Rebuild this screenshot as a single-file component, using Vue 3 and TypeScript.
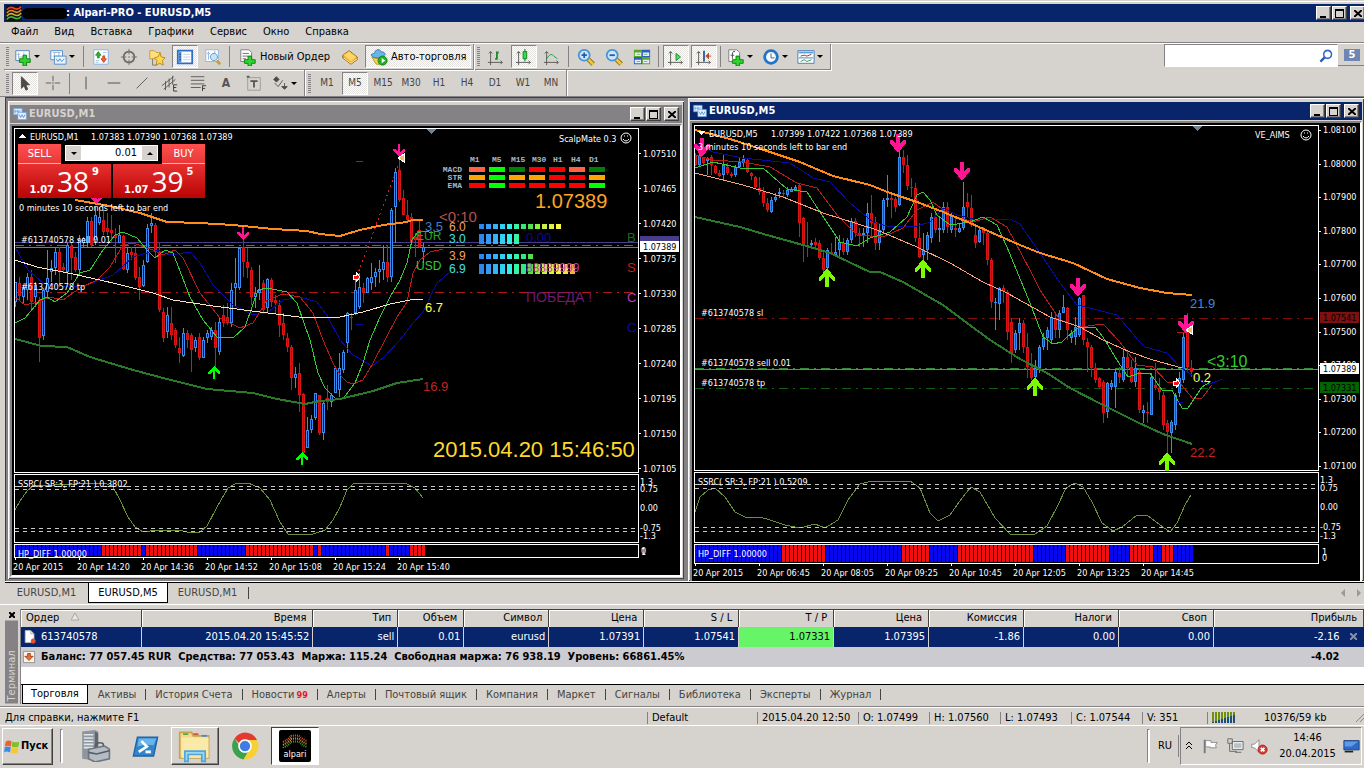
<script setup lang="ts">
import { h, ref } from 'vue'

type Shape = { d: string; f?: string; s?: string; w?: number }
type Candle = { x: number; up: boolean; hi: number; top: number; bottom: number; lo: number }

const icons: Record<string, Shape[]> = {
  newChart: [
    { d: 'M2 3h15v11H2z', f: '#fff', s: '#4a7fb5' },
    { d: 'M5 5v7M3 7h4M5 10h9M11 5v7', s: '#9db8d2' },
    { d: 'M10 8h4v4h4v4h-4v4h-4v-4H6v-4h4z', f: '#2fd52f', s: '#0a7a0a' },
  ],
  profiles: [
    { d: 'M2 3h13v10H2z', f: '#fff', s: '#4a8ac8' },
    { d: 'M4 5h9M6 5v6M11 5v6M4 9h9', s: '#9db8d2' },
    { d: 'M6 9h13v9H6z', f: '#e8f2fb', s: '#4a8ac8' },
    { d: 'M8 12l2 3 2-3 2 3 3-3', s: '#4a8ac8' },
  ],
  market: [
    { d: 'M2 2h16v16H2z', f: '#fff', s: '#7fb2e5' },
    { d: 'M7 4l3 4H8v3H6V8H4z', f: '#2fae2f', s: '#2f8f2f' },
    { d: 'M12 5h4M12 8h3M4 14h4M4 16h3', s: '#9cc4ea' },
    { d: 'M13 16l-3-4h2V9h2v3h2z', f: '#f0643c', s: '#c8401e' },
  ],
  crossCircle: [
    { d: 'M10 4a6 6 0 1 0 .01 0z', s: '#6e6e6e', w: 2 },
    { d: 'M10 1v6M10 13v6M1 10h6M13 10h6M9 10h2', s: '#6e6e6e' },
  ],
  favorites: [
    { d: 'M2 3h5l2 2h5v7H2z', f: '#ffe080', s: '#c89a2c' },
    { d: 'M5 12v7h5', s: '#777' },
    { d: 'M13 6l2 4 4 1-3 3 1 5-4-2-4 2 1-5-3-3 4-1z', f: '#ffd84c', s: '#b88612' },
  ],
  terminal: [
    { d: 'M2 3h16v14H2z', f: '#fff', s: '#2f6ec4', w: 2 },
    { d: 'M3 4h3v12H3z', f: '#4b93e0' },
    { d: 'M8 7h8M8 10h8M8 13h8', s: '#bcd0ea' },
    { d: 'M4 7h1M4 10h1M4 13h1', s: '#000' },
  ],
  tester: [
    { d: 'M2 2h14v13H2z', f: '#fff', s: '#8fb6dc' },
    { d: 'M5 4v9M3 6h4M12 3v6', s: '#8fb6dc' },
    { d: 'M14 14l4 4', s: '#d09a28', w: 3 },
    { d: 'M11 6a4 4 0 1 0 .01 0z', f: '#c9e2f8', s: '#5f95c8' },
  ],
  newOrder: [
    { d: 'M2 2h9l3 3v10H2z', f: '#fff', s: '#777' },
    { d: 'M4 6h7M4 9h6M4 12h4', s: '#666' },
    { d: 'M10 9h4v4h4v4h-4v3h-4v-3H6v-4h4z', f: '#2fd52f', s: '#0a7a0a' },
  ],
  book: [
    { d: 'M2 8l7-5 9 7v3l-7 5-9-7z', f: '#e8a820', s: '#8a5a10' },
    { d: 'M3 8l6-4 8 6-6 5z', f: '#ffd768', s: '#f8c040' },
    { d: 'M3 11l8 6 7-5', s: '#fff3c0' },
  ],
  expert: [
    { d: 'M2 10q8 4 14 0l-4 8H7z', f: '#f7d34c', s: '#b99017' },
    { d: 'M1 8q2 3 8 3t8-4q-1-3-5-3-1-3-4-2t-3 4q-3 0-4 2z', f: '#69b4e8', s: '#2f7fba' },
    { d: 'M14 9a5 5 0 1 0 .01 0z', f: '#23b123', s: '#0d7a0d' },
    { d: 'M13 11l4 3-4 3z', f: '#fff' },
  ],
  bars: [
    { d: 'M4 4v15M2 6l2-2 2 2M1 16h16M15 14l2 2-2 2', s: '#555' },
    { d: 'M11 4v9M9 12h2M11 5h2', s: '#1c8a2c', w: 2 },
  ],
  candles: [
    { d: 'M4 4v15M2 6l2-2 2 2M1 16h16M15 14l2 2-2 2', s: '#555' },
    { d: 'M11 1v14', s: '#086a18' },
    { d: 'M9 4h4v8H9z', f: '#2fe24a', s: '#0a7a1c' },
  ],
  line: [
    { d: 'M4 4v15M2 6l2-2 2 2M1 16h16M15 14l2 2-2 2', s: '#555' },
    { d: 'M4 12q5-8 8-3l4 3', s: '#1c9a3c' },
  ],
  zoomIn: [
    { d: 'M12 12l6 6', s: '#8a6a10', w: 5 },
    { d: 'M12 12l6 6', s: '#f0c840', w: 3 },
    { d: 'M8 2a6 6 0 1 0 .01 0z', f: '#cfe6fa', s: '#4a94d8', w: 2 },
    { d: 'M5 8h6M8 5v6', s: '#1b5faf', w: 2 },
  ],
  zoomOut: [
    { d: 'M12 12l6 6', s: '#8a6a10', w: 5 },
    { d: 'M12 12l6 6', s: '#f0c840', w: 3 },
    { d: 'M8 2a6 6 0 1 0 .01 0z', f: '#cfe6fa', s: '#4a94d8', w: 2 },
    { d: 'M5 8h6', s: '#1b5faf', w: 2 },
  ],
  tiles: [
    { d: 'M1 2h9v8H1zM10 10h9v8h-9z', f: '#5aa428' },
    { d: 'M10 2h9v8h-9zM1 10h9v8H1z', f: '#2c5fc4' },
    { d: 'M2 5h7v4H2zM11 5h7v4h-7zM2 13h7v4H2zM11 13h7v4h-7z', f: '#e6efff' },
    { d: 'M4 7h4M12 7h4M4 15h4M12 15h4', s: '#7ab060' },
  ],
  autoscroll: [
    { d: 'M4 4v15M2 6l2-2 2 2M1 16h16M15 14l2 2-2 2', s: '#555' },
    { d: 'M10 6l5 4-5 4z', f: '#4fe05c', s: '#148a24' },
  ],
  shift: [
    { d: 'M4 4v15M2 6l2-2 2 2M1 16h16M15 14l2 2-2 2', s: '#555' },
    { d: 'M10 3v12', s: '#245a9c', w: 2 },
    { d: 'M12 9l3-3v6zM14 9h4', f: '#e0552a', s: '#b8401c' },
  ],
  indicators: [
    { d: 'M2 2h9l3 3v10H2z', f: '#fff', s: '#777' },
    { d: 'M9 4q-3-1-3 3v5M4 8h4', s: '#444' },
    { d: 'M10 9h4v4h4v4h-4v3h-4v-3H6v-4h4z', f: '#2fd52f', s: '#0a7a0a' },
  ],
  clock: [
    { d: 'M10 3a7 7 0 1 0 .01 0z', f: '#f4faff', s: '#2274c8', w: 3 },
    { d: 'M10 6v5h4', s: '#555' },
  ],
  templates: [
    { d: 'M1 3h18v14H1z', f: '#fff', s: '#3c7ab4' },
    { d: 'M2 4h16v2H2z', f: '#5aa0dc' },
    { d: 'M4 9l4-1 3 1 5-2', s: '#803028' },
    { d: 'M4 15l4-2 3 2 5-2', s: '#2d9440' },
    { d: 'M2 11h16', s: '#3c7ab4' },
  ],
  cursor: [{ d: 'M6 3v13l3-3 2 5 2-1-2-5h4z', f: '#4a4a4a', s: '#4a4a4a' }],
  cross: [{ d: 'M10 2v6M10 12v6M2 10h6M12 10h6M9 10h2', s: '#555' }],
  vline: [{ d: 'M10 3v14', s: '#444' }],
  hline: [{ d: 'M3 10h14', s: '#444' }],
  trend: [{ d: 'M4 16L16 4', s: '#555' }],
  channel: [
    { d: 'M1 13L14 3M3 17L16 6M5 8v10M9 5v10M13 2v10', s: '#555' },
    { d: 'M18 12h-4v7h4M14 15h3', s: '#333' },
  ],
  fibo: [
    { d: 'M2 3h15M2 7h15M2 11h15M2 15h11', s: '#555' },
    { d: 'M19 13h-4v6M15 16h3', s: '#333' },
  ],
  label: [
    { d: 'M3 4h14v14H3z', s: '#999' },
    { d: 'M6 8h8M10 8v7', s: '#555', w: 2 },
    { d: 'M2 2h3v2H2z', f: '#555' },
  ],
  arrows: [
    { d: 'M3 6l3-3 3 3-3 3zM12 14l3 3 3-3z', f: '#4a4a4a', s: '#4a4a4a' },
    { d: 'M4 10l4 4 5-7M15 10v5', s: '#555' },
  ],
  doc: [
    { d: 'M4 2h7l4 4v11H4z', f: '#fff', s: '#bbb' },
    { d: 'M11 2v4h4', s: '#999' },
    { d: 'M14 12a3 3 0 1 0 .01 0z', f: '#e8502a' },
  ],
  down: [
    { d: 'M2 2h16v16H2z', f: '#fbf3e8', s: '#777' },
    { d: 'M8 5h4v4h4l-6 6-6-6h4z', f: '#e8702c', s: '#8a2a10' },
  ],
  chartWin: [
    { d: 'M1 2h12v9H1z', f: '#dcecff', s: '#6ea8e6' },
    { d: 'M3 4v5M7 4v5M2 6h9', s: '#5a93d4' },
    { d: 'M7 8h12v10H7z', f: '#e8f3ff', s: '#6ea8e6' },
    { d: 'M9 11l2 4 2-4 2 4 2-4', s: '#3c78c0' },
  ],
  glass: [
    { d: 'M3 17l6-6', s: '#2d5cb8', w: 3 },
    { d: 'M12 3a5 5 0 1 0 .01 0z', f: '#fff', s: '#3568c8', w: 2 },
  ],
  logo: [
    { d: 'M0 0h20v20H0z', f: '#111' },
    { d: 'M1 6q4-5 9-2t9-2', s: '#f03c28', w: 2 },
    { d: 'M1 10q4-5 9-2t9-2', s: '#f08a28', w: 2 },
    { d: 'M1 14q4-5 9-2t9-2', s: '#c8b428', w: 2 },
    { d: 'M1 18q4-5 9-2t9-2', s: '#3cb43c', w: 2 },
  ],
  windows: [
    { d: 'M2 4q4-2 7 0l-1 6q-4-2-7 0z', f: '#f0602c' },
    { d: 'M10 4q4 2 8 0l-1 6q-4 2-8 0z', f: '#7cc02c' },
    { d: 'M1 11q3-2 7 0l-1 6q-4-2-7 0z', f: '#3c8ae0' },
    { d: 'M9 11q4 2 8 0l-1 6q-4 2-8 0z', f: '#f8c830' },
  ],
  server: [
    { d: 'M2 1l8-1 2 1v16l-2 2-8-1z', f: '#8d969e' },
    { d: 'M3 3h6M3 5h6M3 7h6M3 9h6M3 11h6', s: '#e2e6ea' },
    { d: 'M10 1l2 1v16h-2z', f: '#5e666e' },
    { d: 'M6 12l10-2 3 2v6l-9 2-4-2z', f: '#b4bcc4', s: '#6e767e' },
    { d: 'M10 11q0-3 3-3t2 2M6 14l5 1 8-2', s: '#555d66' },
  ],
  shell: [
    { d: 'M4 3h15l-3 14H1z', f: '#2f86cf', s: '#1f62a4' },
    { d: 'M5 4h13l-2 5q-6-1-12 1z', f: '#6ab4ea' },
    { d: 'M7 6l4 4-6 4M10 14h4', s: '#fff', w: 2 },
  ],
  explorer: [
    { d: 'M1 2h7l1 2h9v13H1z', f: '#f3d889', s: '#c8a24c' },
    { d: 'M3 3h3', s: '#3cb04c' }, { d: 'M9 3h3', s: '#d8502c' }, { d: 'M14 4h3', s: '#3c8ad0' },
    { d: 'M2 5h16v12H2z', f: '#fbe9a8' },
    { d: 'M4 13h12v6h-2v-4H6v4H4z', f: '#9cd6f4', s: '#4fa6d8' },
  ],
  chrome: [
    { d: 'M10 1a9 9 0 0 1 8 5H10a4 4 0 0 0-4 2L3 5A9 9 0 0 1 10 1z', f: '#e23b2e' },
    { d: 'M18 6a9 9 0 0 1-9 13l4-7a4 4 0 0 0-1-6z', f: '#f8cf35' },
    { d: 'M9 19A9 9 0 0 1 3 5L7 11A4 4 0 0 0 13 12z', f: '#3da04c' },
    { d: 'M10 6a4 4 0 1 0 .01 0z', f: '#3f7de0', s: '#fff' },
  ],
  flag: [
    { d: 'M3 3v15', s: '#777', w: 2 },
    { d: 'M4 4h6v2h7l-2 3 1 3h-7v-1H4z', f: '#fff', s: '#888' },
  ],
  network: [
    { d: 'M7 5h12v9H7z', f: '#e8ecf0', s: '#666' },
    { d: 'M9 7h8v5H9z', f: '#b8c0c8' },
    { d: 'M2 2h5v5H2zM4 7v9h8M10 17h7', s: '#666' },
  ],
  sound: [
    { d: 'M2 8h3l5-5v14l-5-5H2z', f: '#fff', s: '#888' },
    { d: 'M14 9a5 5 0 1 0 .01 0z', f: '#e03a2c', s: '#a81c14' },
    { d: 'M12 12l4 4M16 12l-4 4', s: '#fff', w: 2 },
  ],
  monitor: [
    { d: 'M1 3h18v11H1z', f: '#2c6cc8', s: '#1c3c78' },
    { d: 'M2 4h16l-8 6H2z', f: '#5c9ae8' },
    { d: 'M2 15h10v2H2z', f: '#222' },
  ],
}

const Glyph = (p: { name: string; size?: number }) =>
  h(
    'svg',
    { viewBox: '0 0 20 20', width: p.size ?? 18, height: p.size ?? 18, 'aria-hidden': 'true' },
    icons[p.name].map((s) =>
      h('path', { d: s.d, fill: s.f ?? 'none', stroke: s.s ?? 'none', 'stroke-width': s.w ?? 1 }),
    ),
  )
Glyph.props = ['name', 'size']

const menu = ['Файл', 'Вид', 'Вставка', 'Графики', 'Сервис', 'Окно', 'Справка']
const panels = [
  { icon: 'market', on: false, label: 'Обзор рынка' },
  { icon: 'crossCircle', on: false, label: 'Окно данных' },
  { icon: 'favorites', on: false, label: 'Навигатор' },
  { icon: 'terminal', on: true, label: 'Терминал' },
  { icon: 'tester', on: false, label: 'Тестер' },
]
const kinds = [
  { icon: 'bars', on: false, label: 'Бары' },
  { icon: 'candles', on: true, label: 'Свечи' },
  { icon: 'line', on: false, label: 'Линия' },
]
const drawing = ['vline', 'hline', 'trend', 'channel', 'fibo']
const periods = ['M1', 'M5', 'M15', 'M30', 'H1', 'H4', 'D1', 'W1', 'MN']
const period = ref('M5')
const search = ref('')
const volume = ref('0.01')

/* Candle rows: direction, high, body top, body bottom, low; prices in thirds of a pixel from the pane origin */
function candles(src: string, x0: number): Candle[] {
  return src.trim().split(/\s*;\s*/).filter(Boolean).map((row, i) => {
    const [dir, ...v] = row.split(' ')
    const [hi, top, bottom, lo] = v.map((n) => Math.round(100 + Number(n) / 3))
    return { x: x0 + i * 4, up: dir === 'b', hi, top, bottom, lo }
  })
}
function line(src: string, ox: number): string {
  return src.trim().split(' ').map((p) => {
    const [x, y] = p.split(',').map(Number)
    return `${Math.round(ox + x / 3)},${Math.round(100 + y / 3)}`
  }).join(' ')
}

const candlesM1 = candles(`
b 545 545 605 620;r 530 548 588 600;b 555 565 590 610;b 520 530 570 600;r 510 530 605 630;b 545 555 590 620;r 590 600 715 785;
b 565 570 708 720;b 450 535 575 590;b 480 503 515 545;b 445 455 505 525;r 440 457 513 560;r 490 500 510 520;b 425 435 515 550;
r 430 438 475 540;r 455 470 510 515;b 405 418 510 520;b 410 415 430 445;b 350 362 430 445;r 350 362 435 440;b 320 345 420 435;
b 320 350 368 375;r 330 360 395 405;r 340 383 395 405;r 345 390 400 430;r 385 405 415 490;b 375 405 430 430;r 405 408 508 510;
b 440 460 510 520;r 440 455 465 480;r 445 460 535 540;r 500 530 560 600;b 480 495 557 560;b 372 385 485 490;b 340 368 378 400;
r 370 375 455 475;r 430 455 630 635;r 625 635 715 725;b 620 645 695 715;r 620 670 705 720;r 685 690 735 745;r 710 745 760 790;
b 685 700 768 770;r 690 700 720 745;r 700 705 750 815;b 710 720 745 755;r 700 710 775 780;b 710 720 775 775;b 690 700 715 730;
b 680 690 710 720;r 665 690 745 800;b 655 665 755 765;r 615 645 670 680;r 610 650 668 675;b 550 570 670 680;b 475 550 565 620;
b 440 445 565 570;r 400 440 487 530;r 445 485 505 535;r 500 510 590 615;b 560 580 590 625;b 495 570 580 600;r 540 550 630 640;
b 535 538 625 635;r 535 540 605 620;r 585 600 610 640;r 600 615 675 710;r 640 670 705 720;r 700 715 740 755;r 735 740 835 870;
b 800 823 835 865;r 790 820 885 935;r 880 882 1058 1065;b 950 990 1045 1045;b 945 958 990 1000;b 880 880 955 960;
r 885 885 1000 1005;b 900 910 1000 1020;r 855 895 905 930;b 880 885 905 920;b 800 805 878 880;b 760 805 870 890;
b 750 755 810 820;b 635 640 730 760;r 640 650 655 690;b 540 570 640 645;b 520 560 620 628;r 550 565 580 610;b 530 535 580 580;
b 490 530 550 570;b 505 515 530 560;b 480 508 515 550;b 435 485 510 540;r 435 485 530 545;b 325 330 530 545;b 205 215 320 430;
r 180 210 300 305;r 270 295 345 345;r 300 345 360 370;r 340 350 425 430;r 400 410 420 470;r 360 390 440 445;b 430 440 455 490`, 15)

const candlesM5 = candles(`
r 160 165 195 197;b 150 165 195 197;r 170 172 190 195;b 170 175 182 225;r 165 172 195 225;r 195 198 218 222;r 210 220 228 230;
b 165 195 225 240;r 190 200 220 225;r 215 222 228 235;b 195 200 225 232;b 170 185 200 205;b 165 178 190 200;r 175 180 215 220;
r 215 218 228 240;r 228 230 262 265;r 230 265 275 285;r 260 275 310 320;r 295 308 330 335;b 290 300 335 340;b 280 290 300 305;
b 265 275 283 295;r 270 278 283 290;b 262 270 285 290;b 260 268 275 275;b 255 260 270 272;r 250 255 370 410;r 350 355 435 485;
r 365 435 440 470;b 420 428 435 445;r 415 425 435 450;r 420 430 475 480;r 450 475 510 515;b 445 450 505 510;r 430 455 463 465;
b 410 455 465 470;b 405 425 450 470;r 415 430 455 465;b 415 420 455 465;b 355 362 420 430;r 355 362 400 410;r 385 400 408 440;
b 385 400 405 440;b 310 340 400 430;r 285 340 370 410;r 350 365 430 450;b 370 390 430 450;b 295 300 390 395;b 225 295 300 320;
r 280 295 300 355;r 290 298 320 335;b 150 170 315 318;r 150 170 195 220;r 165 195 258 270;r 235 260 265 290;r 250 265 415 425;
r 370 415 470 475;b 400 450 465 480;b 395 405 450 480;b 340 350 415 430;r 340 350 390 400;b 350 385 390 425;b 305 320 390 400;
r 305 320 380 400;b 335 345 390 400;r 350 385 390 410;b 370 385 395 400;b 245 320 385 390;r 280 305 320 355;r 285 325 375 380;
r 375 405 430 445;b 380 390 425 430;r 380 390 400 435;r 395 400 480 495;r 475 480 605 625;b 595 605 610 690;b 560 565 612 660;
r 555 565 572 610;r 570 575 695 720;r 655 665 760 790;b 690 700 750 760;b 655 670 700 750;r 660 670 740 760;r 700 740 800 835;
r 760 800 835 840;b 780 805 830 850;b 735 740 805 820;b 700 715 740 750;b 680 690 715 750;b 635 650 720 725;r 640 655 690 715;
b 630 640 690 715;b 585 620 640 640;r 620 625 690 720;b 690 700 715 730;b 650 680 710 735;b 590 595 705 710;r 585 585 720 735;
r 715 725 740 815;r 735 740 805 830;r 790 805 840 850;r 830 835 860 865;r 840 845 940 970;b 845 850 935 955;b 840 850 860 870;
b 810 815 860 925;r 800 820 830 850;b 750 770 840 845;r 760 770 805 830;r 780 800 845 850;b 770 805 845 860;r 805 815 930 940;
b 915 930 940 970;r 905 935 940 970;b 820 830 945 945;r 790 855 865 870;r 835 865 875 900;r 875 885 975 990;r 960 970 995 1060;
b 960 965 1000 1060;b 880 885 975 990;b 815 835 880 890;b 695 710 840 850;r 640 680 800 815;r 780 805 815 830`, 695)

const M1 = {
  orange: line('225,300 330,317 420,340 500,365 600,368 700,375 820,388 920,393 960,403 1020,408 1080,390 1150,375 1220,366 1235,360 1270,360', 0),
  white: line('45,480 110,500 220,523 340,548 460,580 520,600 640,618 780,635 920,655 1020,650 1090,635 1170,612 1230,600 1268,598', 0),
  forest: line('45,718 125,738 200,742 270,770 400,810 500,838 620,868 760,880 830,898 915,912 960,903 1020,897 1120,873 1190,850 1270,837', 0),
  green: line('45,670 75,655 120,600 140,590 165,605 200,580 240,520 270,510 310,450 345,405 370,397 410,415 440,450 465,475 495,450 520,460 570,590 610,660 650,710 700,715 735,680 775,570 800,563 860,575 890,610 930,720 955,820 975,865 1005,895 1030,898 1065,850 1090,790 1110,720 1140,650 1170,590 1200,540 1220,490 1235,420 1250,400 1275,392 1300,400', 0),
  red: line('45,590 75,615 115,605 150,590 190,600 240,565 290,540 330,500 370,435 400,428 460,450 490,465 525,450 550,475 600,580 660,655 720,685 760,670 800,600 850,583 900,590 940,640 970,720 1000,790 1020,825 1040,845 1060,852 1090,840 1120,790 1155,720 1190,650 1220,605 1240,520 1260,480 1290,455 1330,447', 0),
  blue: line('45,440 85,510 130,550 200,560 260,555 340,525 400,470 470,450 510,465 570,457 600,490 640,555 700,615 760,645 800,640 850,600 900,590 950,605 985,650 1020,720 1060,765 1115,797 1150,775 1200,720 1240,670 1270,635 1310,550 1350,517', 0),
}
const M5 = {
  orange: line('15,90 120,118 240,155 330,185 430,227 540,255 600,280 680,305 760,335 840,370 920,405 990,435 1050,460 1150,490 1250,538 1350,565 1430,580 1505,585', 690),
  salmon: line('15,218 160,255 280,290 400,340 560,390 680,440 780,490 880,545 950,580 1080,650 1170,680 1240,720 1320,755 1390,780 1475,805', 690),
  forest: line('15,352 150,382 230,405 340,435 420,460 540,515 570,517 640,545 760,615 830,670 900,720 990,777 1070,820 1140,865 1240,915 1340,965 1420,1002 1505,1032', 690),
  green: line('15,203 70,185 150,205 220,205 290,268 350,275 390,335 450,425 500,437 540,415 600,395 650,350 680,285 700,275 720,300 740,345 780,375 840,365 880,350 920,375 950,440 1020,610 1060,710 1090,732 1115,725 1130,710 1165,685 1215,680 1240,710 1280,780 1315,830 1350,818 1380,820 1415,870 1445,870 1475,925 1495,925 1535,860 1560,845', 690),
  red: line('15,165 70,180 160,185 240,200 320,250 380,265 440,345 500,405 580,410 640,385 680,330 730,305 780,345 850,365 900,352 950,380 1020,510 1050,570 1110,660 1170,680 1240,672 1290,725 1340,795 1390,800 1430,845 1470,850 1510,898 1535,895 1565,855', 690),
  blue: line('15,130 70,155 160,175 300,190 370,235 420,245 480,310 550,365 600,380 680,378 720,365 760,325 800,345 860,360 960,358 990,372 1050,460 1110,550 1160,615 1210,628 1280,645 1345,720 1365,740 1430,760 1470,800 1550,855 1598,837', 690),
}
const oscM1 = '15,510 20,501 27,491 33,486 75,484 105,483 113,487 120,500 128,517 135,527 143,532 150,531 180,530 190,533 200,532 207,526 217,507 228,488 237,483 248,483 260,488 270,500 280,522 288,534 313,534 325,530 333,520 340,507 347,490 353,484 360,483 405,483 415,488 423,498'
const oscM5 = '695,512 700,497 708,490 715,488 725,497 735,512 745,517 760,517 770,520 785,525 800,528 815,524 825,528 838,520 848,500 860,484 872,481 910,481 920,488 930,513 938,521 950,515 962,498 971,487 980,492 995,518 1010,534 1035,534 1047,526 1058,505 1066,488 1075,483 1083,487 1092,502 1102,523 1113,531 1122,527 1137,515 1147,515 1160,525 1170,532 1177,523 1185,505 1191,495'

/* Two-colour strip: run lengths in bars, starting with blue */
function strip(runs: number[], x0: number) {
  const out: { x: number; c: string }[] = []
  runs.forEach((n, r) => {
    for (let k = 0; k < n; k++) out.push({ x: x0 + out.length * 4, c: r % 2 ? '#f01010' : '#0808f0' })
  })
  return out
}
const stripM1 = strip([22, 10, 1, 13, 12, 17, 1, 1, 16, 1, 5, 4], 14)
const stripM5 = strip([22, 11, 19, 7, 7, 19, 8, 11, 5, 6, 2, 3, 5], 694)

const scaleM1 = ['1.07510', '1.07465', '1.07420', '1.07375', '1.07330', '1.07285', '1.07240', '1.07195', '1.07150', '1.07105']
const scaleM5 = ['1.08100', '1.08000', '1.07900', '1.07800', '1.07700', '1.07600', '1.07500', '1.07400', '1.07300', '1.07200', '1.07100']
const timesM1 = ['20 Apr 2015', '20 Apr 14:20', '20 Apr 14:36', '20 Apr 14:52', '20 Apr 15:08', '20 Apr 15:24', '20 Apr 15:40']
const timesM5 = ['20 Apr 2015', '20 Apr 06:45', '20 Apr 08:05', '20 Apr 09:25', '20 Apr 10:45', '20 Apr 12:05', '20 Apr 13:25', '20 Apr 14:45']

const grid = {
  heads: [['M1', 470], ['M5', 492], ['M15', 511], ['M30', 532], ['H1', 553], ['H4', 571], ['D1', 589]] as [string, number][],
  rows: [
    ['MACD', 'tomato lime green red red tomato green'],
    ['STR', 'orange lime orange orange red red orange'],
    ['EMA', 'red lime red red red red lime'],
  ],
}
const ramp = ['#2d86ee', '#309cf8', '#34b4f4', '#30d0f4', '#30f0e4', '#34f4a8', '#34e880', '#50e050', '#8cf040', '#c8f048', '#e0f040', '#f8f840', '#f8e040', '#f8b040']
const strength = [
  { y: 224, h: 5, n: 12 },
  { y: 234, h: 10, n: 6 },
  { y: 254, h: 5, n: 8 },
  { y: 264, h: 10, n: 14 },
]

const downM1 = [[96, 203], [243, 239], [399, 156]]
const upM1 = [[214, 367], [302, 453]]
const downM5 = [[702, 149], [898, 145], [962, 173], [1078, 289], [1186, 326]]
const upM5 = [[827, 277], [923, 268], [1035, 386], [1167, 461]]

const columns: [string, number, string][] = [
  ['Ордер', 121, '613740578'], ['Время', 171, '2015.04.20 15:45:52'], ['Тип', 85, 'sell'], ['Объем', 66, '0.01'],
  ['Символ', 85, 'eurusd'], ['Цена', 95, '1.07391'], ['S / L', 95, '1.07541'], ['T / P', 95, '1.07331'], ['Цена', 95, '1.07395'],
  ['Комиссия', 95, '-1.86'], ['Налоги', 95, '0.00'], ['Своп', 95, '0.00'], ['Прибыль', 150, '-2.16'],
]
const totalWidth = columns.reduce((s, c) => s + c[1], 0)
const termTabs = ['Активы', 'История Счета', 'Новости', 'Алерты', 'Почтовый ящик', 'Компания', 'Маркет', 'Сигналы', 'Библиотека', 'Эксперты', 'Журнал']
const quotes = ['O: 1.07499', 'H: 1.07560', 'L: 1.07493', 'C: 1.07544', 'V: 351']
</script>

<template>
  <div class="app">
    <header class="titlebar main">
      <Glyph name="logo" :size="16" />
      <span class="redact"></span>
      <h1>: Alpari-PRO - EURUSD,M5</h1>
      <div class="winbtns">
        <button aria-label="Свернуть"><i class="min"></i></button>
        <button aria-label="Развернуть"><i class="max"></i></button>
        <button class="close" aria-label="Закрыть"><svg viewBox="0 0 8 7" width="8" height="7"><path d="M0 0l8 7M8 0L0 7" stroke="#000" stroke-width="2" /></svg></button>
      </div>
    </header>

    <nav class="menu"><button v-for="m in menu" :key="m">{{ m }}</button></nav>

    <div class="bars">
      <div class="toolbar">
        <div class="group">
          <i class="grip"></i>
          <button class="drop" aria-label="Новый график"><Glyph name="newChart" /><i class="caret"></i></button>
          <button class="drop" aria-label="Профили"><Glyph name="profiles" /><i class="caret"></i></button>
          <i class="sep"></i>
          <button v-for="p in panels" :key="p.icon" :class="{ on: p.on }" :aria-label="p.label"><Glyph :name="p.icon" /></button>
          <i class="sep"></i>
          <button class="text"><Glyph name="newOrder" />Новый Ордер</button>
          <button aria-label="Редактор"><Glyph name="book" /></button>
          <button class="text on"><Glyph name="expert" />Авто-торговля</button>
        </div>
        <div class="group">
          <i class="grip"></i>
          <button v-for="k in kinds" :key="k.icon" :class="{ on: k.on }" :aria-label="k.label"><Glyph :name="k.icon" /></button>
          <i class="sep"></i>
          <button aria-label="Увеличить"><Glyph name="zoomIn" /></button>
          <button aria-label="Уменьшить"><Glyph name="zoomOut" /></button>
          <button aria-label="Мозаика"><Glyph name="tiles" /></button>
          <i class="sep"></i>
          <button class="on" aria-label="Автопрокрутка"><Glyph name="autoscroll" /></button>
          <button class="on" aria-label="Сдвиг графика"><Glyph name="shift" /></button>
          <i class="sep"></i>
          <button class="drop" aria-label="Индикаторы"><Glyph name="indicators" /><i class="caret"></i></button>
          <button class="drop" aria-label="Периоды"><Glyph name="clock" /><i class="caret"></i></button>
          <button class="drop" aria-label="Шаблоны"><Glyph name="templates" /><i class="caret"></i></button>
        </div>
        <label class="search"><input v-model="search" type="text" aria-label="Поиск" /><Glyph name="glass" :size="16" /></label>
        <button class="chat" aria-label="Сообщения"><span>5</span></button>
      </div>
      <div class="toolbar second">
        <div class="group">
          <i class="grip"></i>
          <button class="on" aria-label="Курсор"><Glyph name="cursor" /></button>
          <button aria-label="Перекрестие"><Glyph name="cross" /></button>
          <i class="sep"></i>
          <button v-for="d in drawing" :key="d" :aria-label="d"><Glyph :name="d" /></button>
          <button class="letter">A</button>
          <button aria-label="Метка"><Glyph name="label" /></button>
          <button class="drop" aria-label="Стрелки"><Glyph name="arrows" /><i class="caret"></i></button>
        </div>
        <div class="group">
          <i class="grip"></i>
          <button v-for="p in periods" :key="p" class="period" :class="{ on: p === period }" @click="period = p">{{ p }}</button>
        </div>
      </div>
    </div>

    <main class="workspace">
      <section class="window m1">
        <header class="titlebar idle">
          <Glyph name="chartWin" :size="14" />
          <h2>EURUSD,M1</h2>
          <div class="winbtns">
            <button aria-label="Свернуть"><i class="min"></i></button>
            <button aria-label="Развернуть"><i class="max"></i></button>
            <button class="close" aria-label="Закрыть"><svg viewBox="0 0 8 7" width="8" height="7"><path d="M0 0l8 7M8 0L0 7" stroke="#000" stroke-width="2" /></svg></button>
          </div>
        </header>
        <div class="client">
          <svg class="chart" viewBox="12 126 668 449">
            <g class="hair">
              <path d="M15 242h623" stroke="#483d8b" />
              <path d="M15 245h623" stroke="#2f8f2f" stroke-dasharray="9 5 2 5" />
              <path d="M15 247h623" stroke="#708090" />
              <path d="M15 292h623" stroke="#b01818" stroke-dasharray="9 5 2 5" />
              <path d="M357 276L401 158" stroke="#d02020" stroke-dasharray="2 3" />
            </g>
            <g class="candles">
              <g v-for="c in candlesM1" :key="c.x" :class="c.up ? 'up' : 'dn'">
                <rect class="wick" :x="c.x" :y="c.hi" width="1" :height="Math.max(1, c.lo - c.hi)" />
                <rect class="wick" :x="c.x - 1" :y="c.top" width="3" :height="Math.max(1, c.bottom - c.top)" />
                <rect class="core" :x="c.x" :y="c.top + 1" width="1" :height="Math.max(0, c.bottom - c.top - 2)" />
              </g>
            </g>
            <g class="series">
              <polyline :points="M1.blue" stroke="#0a0aa8" />
              <polyline :points="M1.red" stroke="#b81c1c" />
              <polyline :points="M1.green" stroke="#32cd32" />
              <polyline :points="M1.white" stroke="#ffe4c4" />
              <polyline :points="M1.forest" stroke="#2a7a2a" stroke-width="2" />
              <polyline :points="M1.orange" stroke="#ff8c1a" stroke-width="2" />
              <polyline :points="oscM1" stroke="#6b8e3c" />
              <path d="M356 161h7" stroke="#b01818" /><path d="M356 324h7" stroke="#0a0aa8" />
            </g>
            <g class="dashes"><path v-for="y in [486, 489, 528, 531]" :key="y" :d="`M15 ${y}h622`" /></g>
            <rect v-for="b in stripM1" :key="b.x" :x="b.x" y="545" width="3" height="11" :fill="b.c" />
            <g class="frame">
              <path d="M14 128h624v344H14zM14 474h624v68H14zM14 544h624v13H14z" />
              <path v-for="(s, i) in scaleM1" :key="s" :d="`M638 ${153 + i * 35}h3`" />
              <path v-for="(t, i) in timesM1" :key="t" :d="`M${15 + i * 64} 557v3`" />
            </g>
            <path d="M426 129h10l-5 5z" fill="#708090" />
            <g fill="#ff1493"><path v-for="(a, i) in downM1" :key="i" :transform="`translate(${a[0]} ${a[1]})`" d="M-1-12h2v8l3-3h2v2l-6 6-6-6v-2h2l3 3z" /></g>
            <g fill="#00ff00"><path v-for="(a, i) in upM1" :key="i" :transform="`translate(${a[0]} ${a[1]})`" d="M-1 12h2V4l3 3h2V5L0-1l-6 6v2h2l3-3z" /></g>
            <path d="M398 158l6-4v8z" fill="#f4b860" stroke="#fff" />
            <path d="M353 275h3v-3l4 5-4 5v-3h-3z" fill="#ff1010" stroke="#fff" />
            <path d="M18 138l4-4 4 4z" fill="#fff" />
            <g class="small">
              <text x="30" y="140">EURUSD,M1</text><text x="91" y="140">1.07383 1.07390 1.07368 1.07389</text>
              <text x="19" y="211">0 minutes 10 seconds left to bar end</text>
              <text x="21" y="243">#613740578 sell 0.01</text><text x="21" y="290">#613740578 tp</text>
              <text x="18" y="487">SSRC( SR:3, FP:21 ) 0.3802</text><text x="18" y="557">HP_DIFF 1.00000</text>
              <text x="559" y="142">ScalpMate 0.3</text>
              <text v-for="(s, i) in scaleM1" :key="s" x="643" :y="157 + i * 35">{{ s }}</text>
              <text v-for="(t, i) in timesM1" :key="t" :x="13 + i * 64" y="570">{{ t }}</text>
              <text x="640" y="485">1.3</text><text x="640" y="492">0.75</text><text x="640" y="511">0.00</text>
              <text x="640" y="531">-0.75</text><text x="640" y="539">-1.3</text><text x="641" y="554">0</text><text x="641" y="555">1</text>
            </g>
            <rect x="640" y="236" width="39" height="9" fill="#483d8b" />
            <rect x="640" y="241" width="39" height="11" fill="#fff" /><text class="small dark" x="643" y="250">1.07389</text>
            <g class="smile"><circle cx="626" cy="138" r="5" /><path d="M623 139q3 4 6 0M624 136h1M627 136h1" /></g>
            <g class="mono">
              <text v-for="g in grid.heads" :key="g[0]" :x="g[1]" y="162">{{ g[0] }}</text>
              <template v-for="(r, j) in grid.rows" :key="r[0]">
                <text x="462" :y="172 + j * 8" text-anchor="end">{{ r[0] }}</text>
                <rect v-for="(c, i) in r[1].split(' ')" :key="i" :x="469 + i * 20" :y="167 + j * 8" width="16" height="5" :fill="c" />
              </template>
            </g>
            <template v-for="s in strength" :key="s.y">
              <rect v-for="i in s.n" :key="i" :x="472 + i * 7" :y="s.y" width="5" :height="s.h" :fill="ramp[i - 1]" />
            </template>
            <g class="arial">
              <text x="535" y="208" class="t20" fill="#ffa520">1.07389</text>
              <text x="439" y="222" class="t15" fill="#b85050">&lt;0:10</text>
              <text x="425" y="231" class="t13" fill="#3f7fd0">3.5</text>
              <text x="416" y="240" fill="#28a428">EUR</text><text x="416" y="270" fill="#32cd32">USD</text>
              <text x="449" y="231" fill="#f4a460">6.0</text><text x="449" y="243" fill="#40e0e8">3.0</text>
              <text x="449" y="260" fill="#f4a460">3.9</text><text x="449" y="273" fill="#40e0e8">6.9</text>
              <text x="526" y="242" class="t13" fill="#0808a0">0.00</text>
              <text x="526" y="272" fill="#c03cb0">88889999</text>
              <text x="526" y="302" class="t14" fill="#701a70">ПОБЕДА !</text>
              <text x="627" y="242" class="t13" fill="#107010">B</text><text x="627" y="272" class="t13" fill="#d01818">S</text>
              <text x="627" y="302" class="t13" fill="#c030c0">C</text><text x="627" y="332" class="t13" fill="#0a0aa8">C</text>
              <text x="425" y="312" class="t13" fill="#ffff40">6.7</text><text x="423" y="391" class="t13" fill="#c42020">16.9</text>
              <text x="433" y="457" class="t22" fill="#ffd92a">2015.04.20 15:46:50</text>
            </g>
          </svg>
          <form class="trade" @submit.prevent>
            <button class="side">SELL</button>
            <div class="vol">
              <button aria-label="Меньше"><i class="caret"></i></button>
              <input v-model="volume" aria-label="Объем" />
              <button aria-label="Больше"><i class="caret upward"></i></button>
            </div>
            <button class="side">BUY</button>
            <button class="price"><small>1.07</small><b>38</b><sup>9</sup></button>
            <button class="price"><small>1.07</small><b>39</b><sup>5</sup></button>
          </form>
        </div>
      </section>

      <section class="window m5">
        <header class="titlebar">
          <Glyph name="chartWin" :size="14" />
          <h2>EURUSD,M5</h2>
          <div class="winbtns">
            <button aria-label="Свернуть"><i class="min"></i></button>
            <button aria-label="Развернуть"><i class="max"></i></button>
            <button class="close" aria-label="Закрыть"><svg viewBox="0 0 8 7" width="8" height="7"><path d="M0 0l8 7M8 0L0 7" stroke="#000" stroke-width="2" /></svg></button>
          </div>
        </header>
        <div class="client">
          <svg class="chart" viewBox="692 123 668 458">
            <g class="hair">
              <path d="M695 318h623" stroke="#801010" stroke-dasharray="9 5 2 5" />
              <path d="M695 369h623" stroke="#708090" />
              <path d="M695 368h623" stroke="#2f8f2f" stroke-dasharray="9 5 2 5" />
              <path d="M695 388h623" stroke="#106010" stroke-dasharray="9 5 2 5" />
            </g>
            <g class="candles">
              <g v-for="c in candlesM5" :key="c.x" :class="c.up ? 'up' : 'dn'">
                <rect class="wick" :x="c.x" :y="c.hi" width="1" :height="Math.max(1, c.lo - c.hi)" />
                <rect class="wick" :x="c.x - 1" :y="c.top" width="3" :height="Math.max(1, c.bottom - c.top)" />
                <rect class="core" :x="c.x" :y="c.top + 1" width="1" :height="Math.max(0, c.bottom - c.top - 2)" />
              </g>
            </g>
            <g class="series">
              <polyline :points="M5.blue" stroke="#0a0aa8" />
              <polyline :points="M5.red" stroke="#b81c1c" />
              <polyline :points="M5.green" stroke="#32cd32" />
              <polyline :points="M5.salmon" stroke="#ffa07a" />
              <polyline :points="M5.forest" stroke="#2a7a2a" stroke-width="2" />
              <polyline :points="M5.orange" stroke="#ff8c1a" stroke-width="2" />
              <polyline :points="oscM5" stroke="#6b8e3c" />
              <path d="M1177 332h8" stroke="#b01818" /><path d="M1177 402h6" stroke="#0a0aa8" />
            </g>
            <g class="dashes"><path v-for="y in [484, 488, 527, 531]" :key="y" :d="`M695 ${y}h622`" /></g>
            <rect v-for="b in stripM5" :key="b.x" :x="b.x" y="545" width="3" height="17" :fill="b.c" />
            <g class="frame">
              <path d="M694 125h624v345H694zM694 472h624v70H694zM694 544h624v19H694z" />
              <path v-for="(s, i) in scaleM5" :key="s" :d="`M1318 ${Math.round(130 + i * 33.6)}h3`" />
              <path v-for="(t, i) in timesM5" :key="t" :d="`M${695 + i * 64} 563v3`" />
            </g>
            <path d="M1192 126h10l-5 5z" fill="#708090" />
            <g fill="#ff1493"><path v-for="(a, i) in downM5" :key="i" :transform="`translate(${a[0]} ${a[1]})`" d="M-2-11h4v9l4-3h2v3L0 8l-8-10v-3h2l4 3z" /></g>
            <g fill="#7cfc00"><path v-for="(a, i) in upM5" :key="i" :transform="`translate(${a[0]} ${a[1]})`" d="M-2 10h4V0l5 4h1V1L0-9l-8 10v3h1l5-4z" /></g>
            <path d="M1186 330l6-4v8z" fill="#f4b860" stroke="#fff" />
            <path d="M1173 381h3v-3l4 5-4 5v-3h-3z" fill="#ff1010" stroke="#fff" />
            <path d="M697 131h8l-4 4z" fill="#fff" />
            <g class="small">
              <text x="709" y="137">EURUSD,M5</text><text x="771" y="137">1.07399 1.07422 1.07368 1.07389</text>
              <text x="698" y="150">3 minutes 10 seconds left to bar end</text>
              <text x="701" y="316">#613740578 sl</text><text x="701" y="366">#613740578 sell 0.01</text><text x="701" y="386">#613740578 tp</text>
              <text x="698" y="485">SSRC( SR:3, FP:21 ) 0.5209</text><text x="698" y="557">HP_DIFF 1.00000</text>
              <text x="1255" y="138">VE_AIMS</text>
              <text v-for="(s, i) in scaleM5" :key="s" x="1323" :y="Math.round(133 + i * 33.6)">{{ s }}</text>
              <text v-for="(t, i) in timesM5" :key="t" :x="693 + i * 64" y="576">{{ t }}</text>
              <text x="1320" y="483">1.3</text><text x="1320" y="491">0.75</text><text x="1320" y="510">0.00</text>
              <text x="1320" y="530">-0.75</text><text x="1320" y="539">-1.3</text><text x="1322" y="555">1</text><text x="1322" y="561">0</text>
            </g>
            <rect x="1320" y="312" width="39" height="11" fill="#801010" /><text class="small dark" x="1323" y="321">1.07541</text>
            <rect x="1320" y="363" width="39" height="11" fill="#fff" /><text class="small dark" x="1323" y="372">1.07389</text>
            <rect x="1320" y="382" width="39" height="11" fill="#006400" /><text class="small dark" x="1323" y="391">1.07331</text>
            <g class="smile"><circle cx="1306" cy="135" r="5" /><path d="M1303 136q3 4 6 0M1304 133h1M1307 133h1" /></g>
            <g class="arial">
              <text x="1190" y="308" class="t13" fill="#3f86dc">21.9</text><text x="1190" y="457" class="t13" fill="#c42020">22.2</text>
              <text x="1207" y="367" class="t16" fill="#32cd32">&lt;3:10</text><text x="1193" y="382" class="t13" fill="#ffff40">0.2</text>
            </g>
          </svg>
        </div>
      </section>
    </main>

    <div class="sheets">
      <button>EURUSD,M1</button><button class="active">EURUSD,M5</button><button>EURUSD,M1</button><i class="pipe"></i>
      <span class="arrows"><button aria-label="Назад"><i class="tri left"></i></button><button aria-label="Вперед"><i class="tri"></i></button></span>
    </div>

    <section class="terminal">
      <aside><button aria-label="Закрыть терминал"><svg viewBox="0 0 6 6" width="6" height="6"><path d="M0 0l6 6M6 0L0 6" stroke="#000" stroke-width="2" /></svg></button><span>Терминал</span></aside>
      <div class="body">
        <table>
          <colgroup><col v-for="(c, i) in columns" :key="i" :style="{ width: (c[1] / totalWidth) * 100 + '%' }" /></colgroup>
          <thead><tr><th v-for="(c, i) in columns" :key="i">{{ c[0] }}<svg v-if="i === 0" class="sort" viewBox="0 0 9 8" width="9" height="8"><path d="M4 0L0 7h8z" fill="#e8e6e2" stroke="#a8a8a0" /></svg></th></tr></thead>
          <tbody>
            <tr class="order"><td v-for="(c, i) in columns" :key="i" :class="{ tp: i === 7 }"><Glyph v-if="i === 0" name="doc" :size="16" />{{ c[2] }}<button v-if="i === 12" aria-label="Закрыть ордер"><svg viewBox="0 0 7 7" width="7" height="7"><path d="M0 0l7 7M7 0L0 7" stroke="#8490ac" stroke-width="2" /></svg></button></td></tr>
            <tr class="sum"><td colspan="12"><Glyph name="down" :size="14" />Баланс: 77 057.45 RUR&nbsp; Средства: 77 053.43&nbsp; Маржа: 115.24&nbsp; Свободная маржа: 76 938.19&nbsp; Уровень: 66861.45%</td><td>-4.02</td></tr>
          </tbody>
        </table>
        <div class="tabs">
          <button class="active">Торговля</button>
          <button v-for="t in termTabs" :key="t">{{ t }}<b v-if="t === 'Новости'">99</b></button>
        </div>
      </div>
    </section>

    <footer class="status">
      <span class="hint">Для справки, нажмите F1</span><span class="c-profile">Default</span><span class="c-time">2015.04.20 12:50</span>
      <span v-for="q in quotes" :key="q" class="c-quote">{{ q }}</span>
      <span class="c-net"><svg viewBox="0 0 24 11" width="24" height="11"><path v-for="i in 8" :key="i" :d="`M${i * 3 - 2} 0v${11 - i}`" stroke="#6f8f10" stroke-width="2" /><path v-for="i in 8" :key="'b' + i" :d="`M${i * 3 - 2} 11v${-i}`" stroke="#1c4f78" stroke-width="2" /></svg>10376/59 kb</span>
      <svg class="corner" viewBox="0 0 8 8" width="8" height="8"><path d="M0 8l8-8M4 8l4-4" stroke="#888" /></svg>
    </footer>

    <footer class="taskbar">
      <button class="start"><Glyph name="windows" :size="17" />Пуск</button>
      <i class="rule"></i>
      <button class="task" aria-label="Диспетчер сервера"><Glyph name="server" :size="32" /></button>
      <button class="task" aria-label="PowerShell"><Glyph name="shell" :size="27" /></button>
      <button class="task raised" aria-label="Проводник"><Glyph name="explorer" :size="34" /></button>
      <button class="task" aria-label="Chrome"><Glyph name="chrome" :size="30" /></button>
      <button class="task current"><span><svg viewBox="0 0 26 14" width="26" height="14"><g fill="none" stroke-width="2" stroke-dasharray="1 1"><path d="M1 8q6-3 8-6 4-1 8 0 3 3 8 5" stroke="#e05030" /><path d="M1 11q6-3 8-6 4-1 8 0 3 3 8 5" stroke="#c8a028" /><path d="M1 14q6-3 8-6 4-1 8 0 3 3 8 5" stroke="#4f9a2c" /></g></svg>alpari</span></button>
      <span class="space"></span>
      <i class="rule"></i><span class="lang">RU</span><i class="pipe"></i>
      <div class="tray">
        <span class="chev"><svg viewBox="0 0 6 8" width="6" height="8"><path d="M0 3l3-3 3 3M0 7l3-3 3 3" fill="none" stroke="#000" /></svg></span>
        <Glyph name="flag" :size="18" /><Glyph name="network" :size="18" /><Glyph name="sound" :size="18" />
        <time>14:46<br />20.04.2015</time>
        <Glyph name="monitor" :size="17" />
      </div>
    </footer>
  </div>
</template>

<style>
html, body { background: #d6d3ce; }
</style>

<style scoped>
.app {
  min-height: 100vh;
  display: flex;
  flex-direction: column;
  overflow: hidden;
  background: #d6d3ce;
  color: #000;
  font: 11px/14px "DejaVu Sans Condensed", "Noto Sans", sans-serif;
  box-sizing: border-box;
  border-top: 1px solid #d6d3ce;
  box-shadow: inset 0 1px 0 #fff;
  padding-top: 3px;
}
.app *, .app *::before { box-sizing: border-box; }
button, input { font: inherit; color: inherit; margin: 0; padding: 0; border: 0; background: none; border-radius: 0; }
h1, h2 { font: inherit; font-weight: bold; margin: 0; }
svg { display: block; flex: none; }
i { display: block; flex: none; }

.titlebar { display: flex; align-items: center; height: 18px; background: #08246b; color: #fff; padding: 0 3px; }
.titlebar.idle { background: #848284; color: #d6d3ce; }
.titlebar h2 { margin-left: 2px; }
.titlebar.main { margin-left: 4px; padding: 0 0 0 2px; }
.titlebar.main .winbtns { margin-right: -1px; }
.redact { width: 46px; height: 11px; border-radius: 6px; background: #000; margin-right: -2px; }
.winbtns { margin-left: auto; display: flex; gap: 1px; }
.winbtns button {
  width: 15px; height: 14px; display: flex; align-items: center; justify-content: center; background: #d6d3ce;
  border: 1px solid; border-color: #fff #404040 #404040 #fff; box-shadow: inset -1px -1px 0 #848284;
}
.winbtns .close { margin-left: 2px; }
.min { width: 6px; height: 2px; background: #000; margin: 7px 2px 0 0; }
.max { width: 9px; height: 9px; border: 1px solid #000; border-top-width: 2px; }

.menu { display: flex; height: 20px; padding-left: 3px; }
.menu button { padding: 0 8px; }
.bars { border-top: 1px solid #848284; border-bottom: 1px solid #848284; box-shadow: inset 0 1px 0 #fff; padding: 1px 0 0 4px; }
.toolbar { display: flex; height: 26px; align-items: stretch; }
.group { display: flex; align-items: center; padding: 0 1px; border-right: 1px solid #848284; border-bottom: 1px solid #848284; box-shadow: 1px 1px 0 #fff; margin-right: 1px; }
.second .group { border-bottom: 0; box-shadow: 1px 0 0 #fff; }
.grip { width: 3px; height: 19px; margin: 0 2px 0 1px; background: repeating-linear-gradient(#848284 0 1px, #d6d3ce 1px 2px); }
.group button { width: 26px; height: 23px; margin: 0 1px; display: flex; align-items: center; justify-content: center; border: 1px solid transparent; }
.group .drop { width: 33px; justify-content: space-between; padding: 0 4px 0 1px; }
.group .text { width: auto; padding: 0 4px; gap: 3px; }
.group .on {
  border-color: #848284 #fff #fff #848284;
  background: conic-gradient(#fff 25%, #e4e2de 0 50%, #fff 0 75%, #e4e2de 0) 0 0 / 2px 2px;
}
.group .letter { font-weight: bold; color: #555; font-size: 12px; }
.group .period { color: #444; font-size: 10px; }
.sep { width: 1px; height: 21px; background: #848284; margin: 0 3px 0 2px; }
.second .sep { margin: 0 2px; }
.caret { width: 0; height: 0; border: 3px solid transparent; border-top-color: #000; border-bottom: 0; }
.caret.upward { border-top: 0; border-bottom: 3px solid #000; }
.search { margin-left: auto; width: 174px; height: 23px; background: #fff; border: 1px solid; border-color: #848284 #fff #fff #848284; display: flex; align-items: center; padding-right: 3px; }
.search input { flex: 1; min-width: 0; height: 20px; outline: 0; padding-left: 3px; }
.chat { width: 26px; height: 22px; border-bottom: 1px solid #848284; display: flex; align-items: center; justify-content: center; }
.chat span { background: #6f86b4; color: #fff; font-weight: bold; width: 16px; height: 12px; line-height: 12px; margin-left: 2px; }

.workspace { display: flex; align-items: flex-start; gap: 4px; margin-left: 5px; padding-left: 2px; background: #848284; border-left: 1px solid #404040; border-top: 1px solid #404040; }
.window { flex: 1 1 0; min-width: 0; background: #d6d3ce; padding: 4px 2px 2px; border: 0; box-shadow: inset 1px 1px 0 #fff, inset -1px -1px 0 #404040; }
.m1 { margin-top: 3px; }
.m5 { padding-bottom: 0; }
.client { position: relative; border: 2px solid; border-color: #848284 #fff #fff #848284; margin-top: 1px; background: #000; }
.m5 .client { border-bottom: 0; }
.chart { width: 100%; height: auto; background: #000; shape-rendering: crispEdges; }
.chart path { stroke-width: 1; }
.hair path, .series polyline, .series path { fill: none; }
.up .wick { fill: #3c8cf0; }
.up .core { fill: #081638; }
.m5 .up .core { fill: #1c50a8; }
.dn .wick { fill: #d81414; }
.dn .core { fill: #c00c0c; }
.dashes { fill: none; stroke: #c8c8c8; stroke-dasharray: 4 4; }
.frame { fill: none; stroke: #fff; }
.small { font: 9px "DejaVu Sans Condensed", "Noto Sans", sans-serif; fill: #fff; }
.small.dark { fill: #000; }
.smile { fill: none; stroke: #fff; shape-rendering: auto; }
.mono { font: bold 8px "Liberation Mono", monospace; }
.mono text { fill: #a8b8c8; }
.arial { font: 12px "Liberation Sans", Arial, sans-serif; }
.t13 { font-size: 13px; }
.t14 { font-size: 14px; }
.t15 { font-size: 15px; }
.t16 { font-size: 16px; }
.t20 { font-size: 20px; }
.t22 { font-size: 22px; }

.trade { position: absolute; left: 6px; top: 18px; width: 187px; display: grid; grid-template-columns: 43px 1fr 1fr 43px; column-gap: 0; color: #fff; }
.side { height: 20px; background: linear-gradient(#ff5050, #e83838); border-bottom: 1px solid #ffb0b0; }
.trade .vol { grid-column: 2 / 4; margin: 1px 4px 0; height: 16px; display: flex; background: #fff; color: #000; }
.vol button { width: 15px; margin: 1px; background: #d6d3ce; display: flex; align-items: center; justify-content: center; }
.vol input { flex: 1; min-width: 0; text-align: right; padding-right: 4px; }
.price { height: 34px; background: linear-gradient(#e83030, #b80404); display: flex; align-items: flex-end; justify-content: center; gap: 3px; }
.price:nth-of-type(3) { grid-column: 1 / 3; margin-right: 1px; }
.price:nth-of-type(4) { grid-column: 3 / 5; margin-left: 1px; }
.price small { font-size: 11px; font-weight: bold; line-height: 16px; }
.price b { font: 28px/33px "Open Sans", "Noto Sans", sans-serif; }
.price sup { align-self: flex-start; font-size: 11px; font-weight: bold; line-height: 16px; }

.sheets { display: flex; align-items: stretch; height: 21px; margin: 1px 0 0 5px; border-top: 1px solid #000; box-shadow: 0 -1px 0 #fff; color: #444; }
.sheets > button { width: 83px; }
.sheets > button.active { width: 80px; background: #fff; color: #000; border: solid #000; border-width: 0 1px 1px; }
.sheets > button:nth-of-type(3) { width: 79px; }
.pipe { width: 1px; background: #444; margin: 4px 1px; }
.arrows { margin-left: auto; display: flex; align-items: center; gap: 12px; padding-right: 3px; }
.tri { width: 0; height: 0; border: 4px solid transparent; border-left-color: #999; border-right: 0; }
.tri.left { border-left: 0; border-right: 4px solid #999; }

.terminal { display: flex; margin-top: 1px; border-top: 1px solid #fff; padding: 4px 0 2px 5px; }
aside { width: 15px; display: flex; flex-direction: column; padding-right: 2px; }
aside button { height: 12px; display: flex; align-items: center; justify-content: center; }
aside span { flex: 1; background: #848284; color: #d6d3ce; writing-mode: vertical-rl; transform: rotate(180deg); line-height: 13px; padding-top: 2px; }
.body { flex: 1; min-width: 0; background: #fff; border-left: 1px solid #848284; }
table { width: 100%; table-layout: fixed; border-collapse: collapse; border-top: 1px solid #404040; }
th, td { font-weight: normal; text-align: right; padding: 0 6px 0 0; white-space: nowrap; }
th { height: 17px; background: #d6d3ce; border-right: 1px solid #404040; box-shadow: inset 1px 1px 0 #fff; }
th:first-child { text-align: left; padding-left: 5px; }
.sort { display: inline-block; margin-left: 12px; }
.order td { height: 20px; background: #08246b; color: #fff; border-right: 1px solid #d6d3ce; padding-right: 3px; }
.order td:first-child { text-align: left; padding-left: 1px; }
.order td:first-child svg { display: inline-block; vertical-align: middle; margin-right: 3px; }
.order .tp { background: #66f566; color: #000; }
.order td:last-child { border-right: 0; padding-right: 7px; }
.order button { margin-left: 10px; width: 7px; }
.sum td { height: 20px; background: #cccbd0; font-weight: bold; padding-right: 24px; }
.sum td:first-child { text-align: left; padding-left: 1px; }
.sum svg { display: inline-block; vertical-align: middle; margin-right: 5px; }
.tabs { display: flex; margin-top: 17px; background: #d6d3ce; border-top: 1px solid #000; height: 20px; color: #444; }
.tabs button { padding: 0 10px 0 9px; height: 20px; }
.tabs button:not(.active)::before { content: ""; float: right; width: 1px; height: 11px; background: #444; margin: 1px -10px 0 9px; }
.tabs .active { background: #fff; color: #000; border: solid #000; border-width: 0 1px 1px; margin: 0 1px 0 1px; height: 19px; padding: 0 8px; }
.tabs b { color: #e01828; font-size: 9px; margin-left: 2px; }

.status { display: flex; align-items: center; height: 19px; padding-top: 4px; border-top: 1px solid #848284; box-shadow: inset 0 1px 0 #fff; }
.status > span { border-left: 1px solid #848284; height: 12px; line-height: 12px; padding-left: 4px; white-space: nowrap; }
.status .hint { flex: 1; border: 0; padding-left: 5px; }
.status .c-profile { width: 110px; }
.status .c-time { width: 101px; }
.status .c-quote { width: 71px; }
.status .c-quote:nth-of-type(8) { width: 65px; }
.status .c-net { width: 149px; display: flex; gap: 28px; }

.taskbar { display: flex; align-items: center; height: 42px; border-top: 1px solid #fff; padding: 0 2px; }
.start { width: 51px; height: 37px; display: flex; align-items: center; border: 1px solid; border-color: #fff #404040 #404040 #fff; font-weight: bold; box-shadow: inset -1px -1px 0 #848284; padding-left: 1px; }
.rule { width: 3px; height: 34px; border: 1px solid; border-color: #848284 #fff #fff #848284; background: #fff; margin: 0 8px 0 7px; }
.task { width: 48px; height: 38px; margin-right: 2px; display: flex; align-items: center; justify-content: center; border: 1px solid transparent; }
.raised { border-color: #fff #404040 #404040 #fff; box-shadow: inset -1px -1px 0 #848284; }
.current { background: #fff; border-color: #404040 #fff #fff #404040; }
.current span { width: 32px; height: 32px; border-radius: 2px; background: #000; color: #fff; display: flex; flex-direction: column; align-items: center; justify-content: flex-end; font: 9px/12px "DejaVu Sans Condensed", sans-serif; padding-bottom: 2px; }
.space { flex: 1; }
.lang { margin-right: 5px; }
.taskbar .pipe { height: 22px; background: #848284; }
.tray { width: 182px; height: 38px; display: flex; align-items: center; gap: 6px; border: 1px solid; border-color: #848284 #fff #fff #848284; padding: 0 1px 0 5px; }
.chev { margin-right: 4px; }
.tray time { flex: 1; text-align: center; line-height: 16px; padding-left: 4px; }
</style>
